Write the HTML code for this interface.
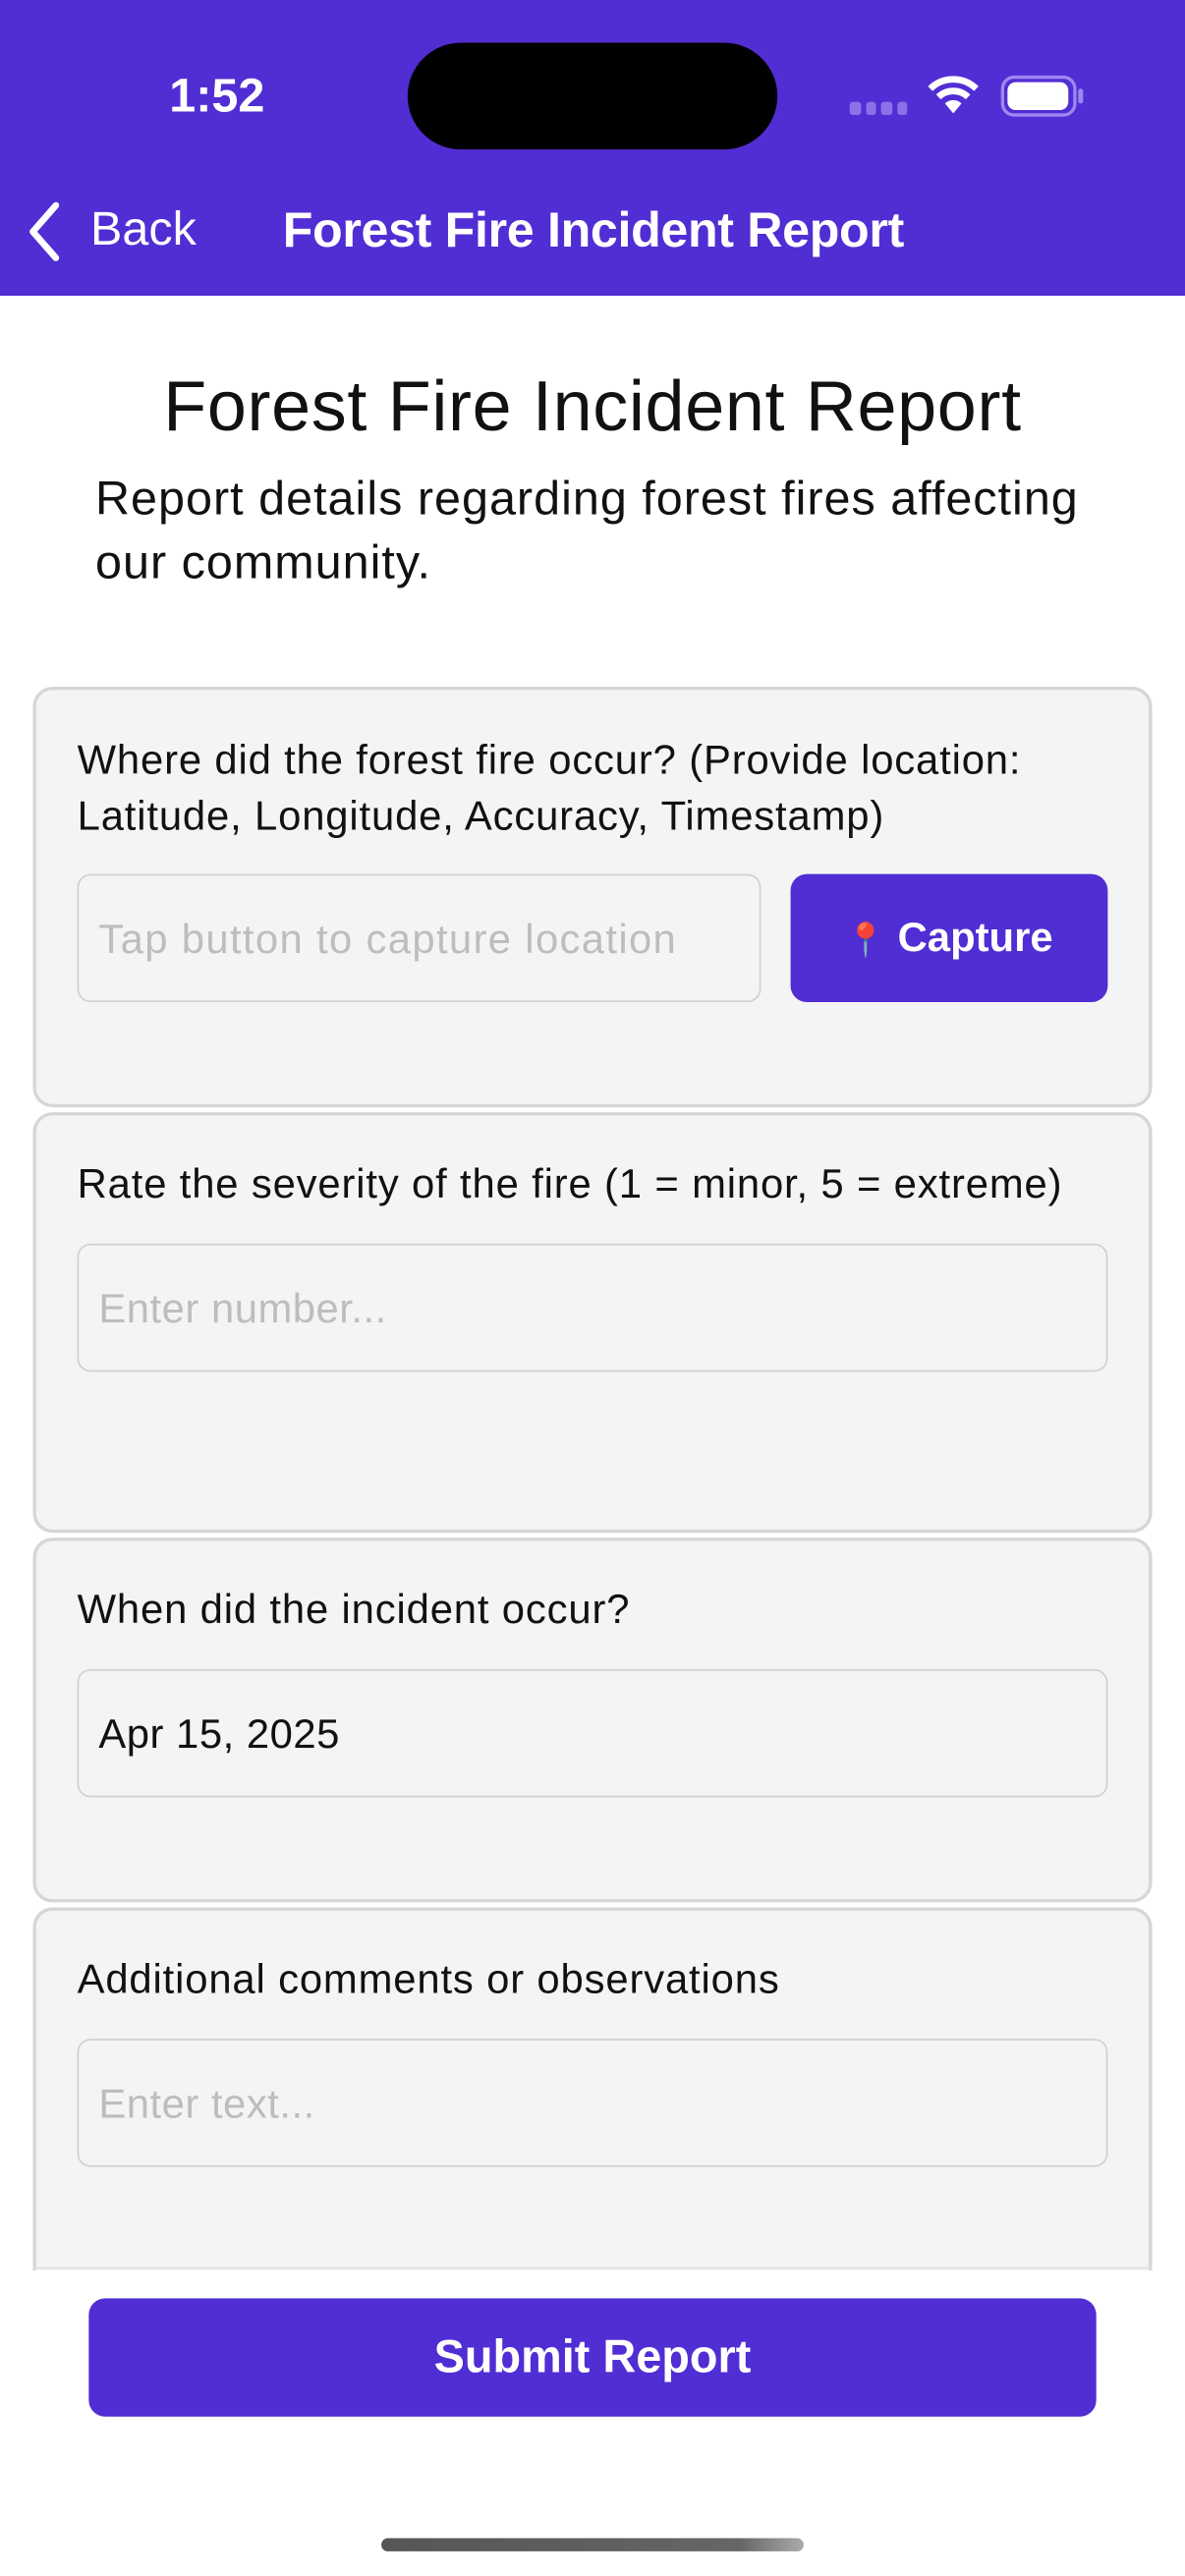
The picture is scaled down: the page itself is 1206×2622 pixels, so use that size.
<!DOCTYPE html>
<html><head><meta charset="utf-8"><style>
*{margin:0;padding:0;box-sizing:border-box}
html,body{width:1206px;height:2622px;overflow:hidden;background:#fff}
#s{width:721px;height:1568px;transform:scale(1.67268,1.6722);transform-origin:0 0;position:relative;font-family:"Liberation Sans",sans-serif;color:#000}
.a{position:absolute}
.hdr{left:0;top:0;width:721px;height:180px;background:#512dd4}
.card{left:20px;width:681px;background:#f4f4f4;border:2px solid #d6d6d6;border-radius:12px}
.lbl{left:47px;font-size:25px;letter-spacing:0.5px;line-height:34px;color:#111;white-space:nowrap}
.inp{left:47px;width:627px;height:78px;border:1px solid #d0d0d0;border-radius:8px;background:#f4f4f4;font-size:25px;letter-spacing:0.3px;line-height:78px;padding-left:12px;color:#bdbdbd}
</style></head><body><div id="s">
<div class="a hdr"></div>
<div class="a" style="left:103px;top:43px;font-size:29px;font-weight:bold;color:#fff">1:52</div>
<div class="a" style="left:248px;top:26px;width:225px;height:65px;border-radius:33px;background:#000"></div>
<div class="a" style="left:517px;top:62px;width:35px;height:8px;display:flex;gap:3px"><i style="flex:1;background:#8a72e6;border-radius:2px"></i><i style="flex:1;background:#8a72e6;border-radius:2px"></i><i style="flex:1;background:#8a72e6;border-radius:2px"></i><i style="flex:1;background:#8a72e6;border-radius:2px"></i></div>
<svg class="a" style="left:564px;top:46px" width="32" height="24" viewBox="0 0 32 24"><path d="M2 8 A20 20 0 0 1 30 8" stroke="#fff" stroke-width="4" fill="none"/><path d="M7 13 A13 13 0 0 1 25 13" stroke="#fff" stroke-width="4" fill="none"/><path d="M11 17 L16 23 L21 17 A7 7 0 0 0 11 17Z" fill="#fff"/></svg>
<div class="a" style="left:609px;top:46px;width:46px;height:25px;border:2px solid #9c88ee;border-radius:8px"></div>
<div class="a" style="left:613px;top:50px;width:37px;height:17px;background:#fff;border-radius:5px"></div>
<div class="a" style="left:656px;top:54px;width:3px;height:9px;background:#9c88ee;border-radius:2px"></div>
<svg class="a" style="left:14px;top:122px" width="26" height="38" viewBox="0 0 26 38"><path d="M20 3 L6 19 L20 35" stroke="#fff" stroke-width="4" fill="none" stroke-linecap="round" stroke-linejoin="round"/></svg>
<div class="a" style="left:55px;top:124px;font-size:29px;color:#fff">Back</div>
<div class="a" style="left:172px;top:124px;font-size:30px;font-weight:bold;color:#fff;letter-spacing:-0.2px">Forest Fire Incident Report</div>
<div class="a" style="left:0;top:224px;width:721px;text-align:center;font-size:43px;letter-spacing:0.4px;color:#111">Forest Fire Incident Report</div>
<div class="a" style="left:58px;top:285px;width:650px;font-size:29px;letter-spacing:0.6px;line-height:39px;color:#111">Report details regarding forest fires affecting<br>our community.</div>

<div class="a card" style="top:418px;height:256px"></div>
<div class="a lbl" style="top:446px">Where did the forest fire occur? (Provide location:<br>Latitude, Longitude, Accuracy, Timestamp)</div>
<div class="a inp" style="top:532px;width:416px;letter-spacing:0.8px;white-space:nowrap;overflow:hidden">Tap button to capture location</div>
<div class="a" style="left:481px;top:532px;width:193px;height:78px;background:#512dd4;border-radius:10px;color:#fff;font-size:25px;font-weight:bold;line-height:78px;text-align:center"><span style="color:#d22;font-size:20px">📍</span> Capture</div>

<div class="a card" style="top:677px;height:256px"></div>
<div class="a lbl" style="top:704px">Rate the severity of the fire (1 = minor, 5 = extreme)</div>
<div class="a inp" style="top:757px">Enter number...</div>

<div class="a card" style="top:936px;height:222px"></div>
<div class="a lbl" style="top:963px">When did the incident occur?</div>
<div class="a inp" style="top:1016px;color:#111">Apr 15, 2025</div>

<div class="a" style="left:0;top:1161px;width:721px;height:221px;overflow:hidden">
<div class="a card" style="top:0;height:260px"></div>
<div class="a lbl" style="top:27px">Additional comments or observations</div>
<div class="a inp" style="top:80px">Enter text...</div>
</div>
<div class="a" style="left:20px;top:1380px;width:681px;height:1px;background:#ddd"></div>

<div class="a" style="left:54px;top:1399px;width:613px;height:72px;background:#512dd4;border-radius:10px;color:#fff;font-size:28px;font-weight:bold;line-height:72px;text-align:center">Submit Report</div>
<div class="a" style="left:232px;top:1545px;width:257px;height:8px;border-radius:4px;background:linear-gradient(90deg,#555,#666 85%,#aaa)"></div>
</div></body></html>
